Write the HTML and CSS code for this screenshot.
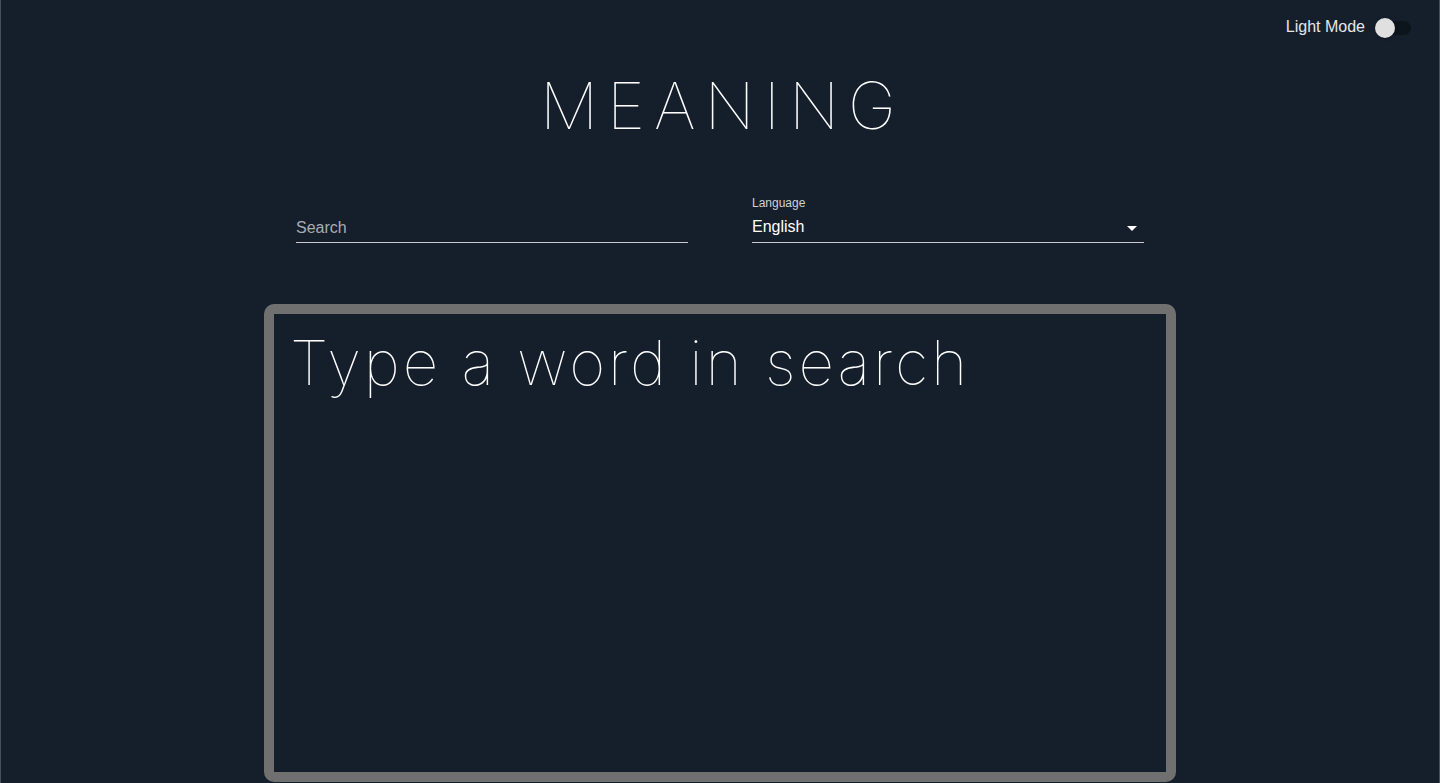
FILE: index.html
```html
<!DOCTYPE html>
<html>
<head>
<meta charset="utf-8">
<link rel="stylesheet" href="styles.css">
</head>
<body>
<div class="app">
  <div class="topbar">
    <span class="mode-label">Light Mode</span>
    <span class="switch"><span class="track"></span><span class="thumb"></span></span>
  </div>
  <h1 class="title">MEANING</h1>
  <div class="controls">
    <div class="field">
      <div class="label-space"></div>
      <div class="input">Search</div>
    </div>
    <div class="field">
      <div class="small-label">Language</div>
      <div class="input select"><span>English</span><svg class="caret" width="10" height="5" viewBox="0 0 10 5"><path d="M0 0h10L5 5z" fill="#fff"/></svg></div>
    </div>
  </div>
  <div class="result">
    <div class="placeholder">Type a word in search</div>
  </div>
</div>
</body>
</html>
```
FILE: styles.css
```css
html, body { margin: 0; padding: 0; }
body { background: #151f2c; font-family: "Liberation Sans", Arial, sans-serif; }
.app {
  height: 783px;
  box-sizing: border-box;
  border-left: 1px solid #46505c;
  border-right: 1px solid #46505c;
  background: #151f2c;
  color: #fff;
  display: flex;
  flex-direction: column;
  align-items: center;
  overflow: hidden;
}
.topbar {
  align-self: stretch;
  display: flex;
  justify-content: flex-end;
  align-items: center;
  padding: 13px 26px 0 0;
  height: 28px;
  gap: 10px;
}
.mode-label { font-size: 16px; color: #e6e6e6; }
.switch { position: relative; width: 38px; height: 20px; display: inline-block; margin-top: 2px; }
.track { position: absolute; left: 2px; top: 3px; width: 34px; height: 14px; border-radius: 7px; background: #0c141c; }
.thumb { position: absolute; left: 0; top: 0; width: 20px; height: 20px; border-radius: 50%; background: #e0e0e0; box-shadow: 0 1px 3px rgba(0,0,0,0.4); }
.title {
  margin: 20px 0 0;
  padding-left: 5px;
  font-family: Inter, sans-serif;
  font-weight: 100;
  font-size: 65px;
  letter-spacing: 9px;
  line-height: 90px;
  color: #fff;
}
.controls {
  display: flex;
  gap: 64px;
  margin-top: 44px;
  width: 848px;
}
.field { width: 392px; }
.label-space { height: 16px; }
.small-label { height: 16px; font-size: 12px; color: #cfd2d6; line-height: 16px; }
.input {
  height: 32px;
  border-bottom: 1px solid #c8ccd0;
  font-size: 16px;
  line-height: 32px;
  color: #a8adb3;
  box-sizing: border-box;
  padding-top: 1px;
}
.select { color: #fff; display: flex; justify-content: space-between; align-items: center; padding-right: 7px; line-height: 30px; }
.caret { margin-top: 2px; }
.result {
  margin-top: 61px;
  width: 912px;
  height: 478px;
  box-sizing: border-box;
  border: 10px solid #707070;
  border-radius: 10px;
  padding: 9px 16px;
}
.placeholder {
  font-family: Inter, sans-serif;
  font-weight: 100;
  font-size: 62px;
  line-height: 80px;
  letter-spacing: 2.9px;
  color: #fff;
}
```
